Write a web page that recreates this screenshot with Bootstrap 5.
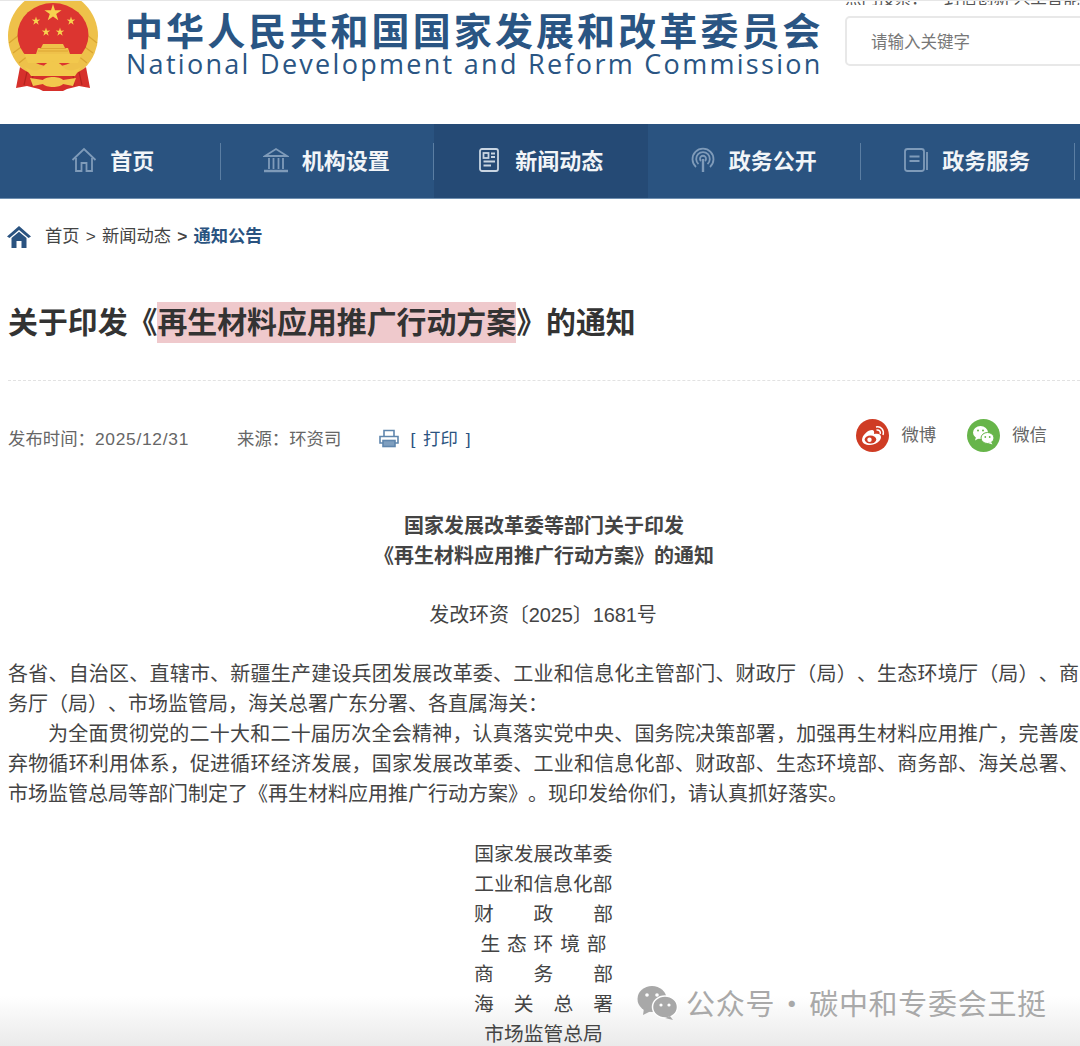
<!DOCTYPE html>
<html lang="zh-CN">
<head>
    <meta charset="UTF-8">
    <meta name="viewport" content="width=device-width, initial-scale=1.0">
    <title>关于印发《再生材料应用推广行动方案》的通知</title>
    <link href="https://cdn.jsdelivr.net/npm/bootstrap@5.3.3/dist/css/bootstrap.min.css" rel="stylesheet">
    <style>
        html, body {
            height: 1046px;
            overflow: hidden;
        }
        body {
            font-family: "Liberation Sans", "Noto Sans CJK SC", sans-serif;
            color: #444;
            background: #fff;
            position: relative;
            text-spacing-trim: space-all;
        }
        .top-strip {
            height: 124px;
            border-top: 1px solid #e6e6e6;
            padding-left: 8px;
            overflow: hidden;
        }
        .emblem {
            width: 92px;
            height: 90px;
            flex: none;
            margin: 0 0 0 -1px;
        }
        .site-name {
            margin-left: 26px;
            width: 701px;
            flex: none;
            color: #2a5583;
        }
        .site-cn {
            font-family: "Noto Sans CJK SC", sans-serif;
            font-weight: 700;
            font-size: 38px;
            letter-spacing: 3.100px;
            line-height: 38px;
            margin-top: 9px;
            white-space: nowrap;
        }
        .site-en {
            font-family: "Open Sans", sans-serif;
            font-size: 27px;
            letter-spacing: 2.290px;
            line-height: 30px;
            margin-top: 1px;
            margin-left: 1px;
            white-space: nowrap;
        }
        .search-side {
            margin-left: 19px;
            flex: 1 0 260px;
        }
        .hot-words {
            font-family: "Noto Sans CJK SC", sans-serif;
            font-size: 16.500px;
            line-height: 16px;
            height: 5px;
            margin-top: -1px;
            margin-bottom: 11px;
            overflow: hidden;
            white-space: nowrap;
            display: flex;
            align-items: flex-end;
            color: #555;
        }
        .search-input.form-control {
            height: 50px;
            border: 2px solid #e8e8e8;
            border-radius: 5px;
            padding-left: 24px;
            font-family: "Noto Sans CJK SC", sans-serif;
            font-size: 16.500px;
        }
        .search-input::placeholder {
            color: #777;
        }
        .main-nav {
            height: 75px;
            background: #2a5380;
            border-bottom: 1px solid #6f8fb0;
            flex-wrap: nowrap;
            width: 1080px;
            padding-left: 7px;
        }
        .main-nav .nav-item {
            width: 213.500px;
            flex: none;
            position: relative;
        }
        .main-nav .nav-item.with-rule::after {
            content: "";
            position: absolute;
            right: 0;
            top: 19px;
            height: 37px;
            width: 1px;
            background: #5b7ea3;
        }
        .main-nav .nav-link {
            height: 74px;
            padding: 0 2px 3px 0;
            display: flex;
            align-items: center;
            justify-content: center;
            gap: 13px;
            color: #f2f5f8;
            font-family: "Noto Sans CJK SC", sans-serif;
            font-size: 22px;
            font-weight: 700;
        }
        .main-nav .nav-link.active {
            background: #254a75;
            color: #f2f5f8;
        }
        .nav-glyph {
            width: 26px;
            height: 26px;
            flex: none;
        }
        .page-body {
            padding: 0 0 0 8px;
            position: relative;
            z-index: 1;
        }
        .crumbs {
            height: 76px;
            align-items: center;
            margin: 0;
            font-size: 17.250px;
            --bs-breadcrumb-divider: ">";
            --bs-breadcrumb-item-padding-x: 6.200px;
            --bs-breadcrumb-divider-color: #444;
            padding-bottom: 0;
        }
        .crumbs a {
            color: #444;
            text-decoration: none;
        }
        .crumbs .breadcrumb-item.active {
            color: #2a5380;
            font-weight: 700;
        }
        .home-glyph {
            width: 24px;
            height: 22px;
            margin: 0 14px 0 -1px;
        }
        .article-title {
            margin: 26px 0 0;
            font-size: 29.900px;
            font-weight: 700;
            line-height: 44px;
            color: #333;
        }
        .article-title span {
            background: #efc9cc;
            padding: 4px 0;
        }
        .dash-rule {
            margin-top: 35px;
            border-top: 1px dashed #e2e2e2;
        }
        .meta-row {
            margin-top: 36px;
            height: 44px;
            font-size: 17.400px;
            color: #666;
            white-space: nowrap;
        }
        .meta-date {
            letter-spacing: .7px;
        }
        .print-link {
            color: #2a5380;
            text-decoration: none;
            margin-left: 38px;
            display: flex;
            align-items: center;
            gap: 11px;
            word-spacing: 3px;
        }
        .share-row {
            margin-right: 33px;
            margin-top: -7px;
            gap: 31px;
        }
        .share-glyph {
            width: 33px;
            height: 33px;
            flex: none;
        }
        .doc-text {
            margin-top: 50px;
            font-size: 20px;
            line-height: 30px;
            color: #444;
        }
        .doc-head {
            font-weight: 700;
            margin: 0;
            text-align: center;
        }
        .doc-no {
            margin: 29px 0 29px;
            padding-right: 2px;
            text-align: center;
            letter-spacing: -.1px;
        }
        .doc-para {
            margin: 0;
            width: 1071px;
            text-align: justify;
        }
        .doc-para.indent {
            text-indent: 2em;
        }
        .sign-block {
            width: 139px;
            margin: 30px 0 0 466px;
            font-size: 19.750px;
        }
        .sign-line {
            text-align: center;
            white-space: nowrap;
        }
        .sign-line.spread {
            text-align: justify;
            text-align-last: justify;
            white-space: normal;
        }
        .sign-line.narrow {
            width: 126px;
            margin: 0 auto;
        }
        .fade-bottom {
            position: absolute;
            left: 0;
            right: 0;
            bottom: 0;
            height: 50px;
            background: linear-gradient(to bottom, rgba(236,236,236,0), rgba(234,234,234,1));
            pointer-events: none;
        }
        .watermark {
            position: absolute;
            z-index: 2;
            left: 637px;
            top: 983px;
            display: flex;
            align-items: center;
            gap: 8px;
            font-family: "Noto Sans CJK SC", sans-serif;
            font-size: 29px;
            letter-spacing: .7px;
            word-spacing: -5px;
            line-height: 38px;
            color: #a9a9a9;
            white-space: nowrap;
        }
        .watermark svg {
            width: 41px;
            height: 35px;
            flex: none;
        }
    </style>
</head>
<body>
    <!-- 顶部 -->
    <header class="top-strip d-flex">
        <svg class="emblem" viewBox="0 0 92 90" aria-hidden="true">
            <defs>
                <polygon id="emblem-star" points="0,-9 2,-2.750 8.560,-2.780 3.230,1.050 5.290,7.280 0,3.400 -5.290,7.280 -3.230,1.050 -8.560,-2.780 -2,-2.750"/>
            </defs>
            <!-- 麦穗外环 -->
            <circle cx="46" cy="35" r="45" fill="#eec14a"/>
            <path d="M2 42 L12 34 M90 42 L80 34 M6 52 L17 44 M86 52 L75 44 M12 62 L22 54 M80 62 L70 54" stroke="#d9a531" stroke-width="1.200"/>
            <ellipse cx="46" cy="34" rx="35.500" ry="32" fill="#dc3530"/>
            <g fill="#f7d34f">
                <use href="#emblem-star" transform="translate(46 12)"/>
                <use href="#emblem-star" transform="translate(29 20) scale(.5)"/>
                <use href="#emblem-star" transform="translate(64 20) scale(.5)"/>
                <use href="#emblem-star" transform="translate(39 31) scale(.5)"/>
                <use href="#emblem-star" transform="translate(53 31) scale(.5)"/>
            </g>
            <!-- 天安门 -->
            <path d="M36 43 H56 L58 47 H61 L63 53 H29 L31 47 H34 Z" fill="#efc14a"/>
            <path d="M33 47.500 H59 M31 50 H61" stroke="#d9a02e" stroke-width=".8"/>
            <path d="M17 53 H75 L71 62 H21 Z" fill="#f2c84d"/>
            <!-- 红绶 -->
            <path d="M13 66 C20 72 28 74 36 74 H56 C64 74 72 72 79 66 L83 87 L72 85 L60 88 L56 90 H36 L32 88 L20 85 L9 87 Z" fill="#d6302b"/>
            <path d="M20 71 L17 84 M26 73 L25 85 M66 73 L67 85 M72 71 L75 84" stroke="#b5231f" stroke-width="1.200"/>
            <path d="M18 66 C26 71 32 70 36 66 C40 59 52 59 56 66 C60 70 66 71 74 66 L68 75 H24 Z" fill="#f2c84d"/>
            <path d="M23 77 L36 79 C39 75 53 75 56 79 L69 77 L66 85 L56 83 C53 87 39 87 36 83 L26 85 Z" fill="#f2c84d"/>
        </svg>
        <div class="site-name">
            <div class="site-cn">中华人民共和国国家发展和改革委员会</div>
            <div class="site-en">National Development and Reform Commission</div>
        </div>
        <div class="search-side">
            <div class="hot-words">热门搜索：一封信创新 人工智能</div>
            <input class="form-control search-input" type="text" placeholder="请输入关键字">
        </div>
    </header>

    <!-- 导航 -->
    <ul class="nav main-nav">
        <li class="nav-item with-rule">
            <a class="nav-link" href="#">
                <svg class="nav-glyph" viewBox="0 0 26 26" fill="none" stroke="#7f9bb9" stroke-width="1.800"><path d="M1.500 13 L13 2 L24.500 13"/><path d="M5 11 V24 H10.500 V16 H15.500 V24 H21 V11"/></svg>
                首页
            </a>
        </li>
        <li class="nav-item with-rule">
            <a class="nav-link" href="#">
                <svg class="nav-glyph" viewBox="0 0 26 26" fill="none" stroke="#7f9bb9" stroke-width="1.800"><path d="M2 9 L13 2 L24 9 Z"/><path d="M6 11 V22 M10.500 11 V22 M15.500 11 V22 M20 11 V22"/><path d="M1 24 H25" stroke-width="2.500"/></svg>
                机构设置
            </a>
        </li>
        <li class="nav-item">
            <a class="nav-link active" href="#">
                <svg class="nav-glyph" viewBox="0 0 26 26" fill="none" stroke="#c9d5e2" stroke-width="1.800"><rect x="4" y="2" width="18" height="22" rx="2"/><rect x="7.500" y="6" width="5" height="5"/><path d="M15 6.500 H19 M15 10 H19 M7.500 14.500 H19 M7.500 18.500 H15"/></svg>
                新闻动态
            </a>
        </li>
        <li class="nav-item with-rule">
            <a class="nav-link" href="#">
                <svg class="nav-glyph" viewBox="0 0 26 26" fill="none" stroke="#7f9bb9" stroke-width="1.800"><path d="M6 20 A10.500 10.500 0 1 1 20 20"/><path d="M8.500 17 A6.800 6.800 0 1 1 17.500 17"/><path d="M11 14 A3 3 0 1 1 15 14"/><path d="M13 12 V25" stroke-width="2.400"/></svg>
                政务公开
            </a>
        </li>
        <li class="nav-item with-rule">
            <a class="nav-link" href="#">
                <svg class="nav-glyph" viewBox="0 0 26 26" fill="none" stroke="#7f9bb9" stroke-width="1.800"><rect x="2" y="2" width="19" height="22" rx="2.500"/><path d="M24 5 V23"/><path d="M6.500 9.500 H16.500 M6.500 14 H16.500"/></svg>
                政务服务
            </a>
        </li>
    </ul>

    <main class="page-body">
        <ol class="breadcrumb crumbs">
            <li class="breadcrumb-item d-flex align-items-center">
                <svg class="home-glyph" viewBox="0 0 24 22"><path d="M12 0 L24 10.500 L21.500 12 L12 4 L2.500 12 L0 10.500 Z" fill="#2a5380"/><path d="M4.500 12 L12 5.800 L19.500 12 V22 H14.500 V15 H9.500 V22 H4.500 Z" fill="#2a5380"/></svg>
                <a href="#">首页</a>
            </li>
            <li class="breadcrumb-item"><a href="#">新闻动态</a></li>
            <li class="breadcrumb-item active" aria-current="page">通知公告</li>
        </ol>

        <h1 class="article-title">关于印发《<span>再生材料应用推广行动方案</span>》的通知</h1>
        <div class="dash-rule"></div>

        <div class="meta-row d-flex align-items-center">
            <span>发布时间：<span class="meta-date">2025/12/31</span></span>
            <span class="ms-5">来源：环资司</span>
            <a class="print-link" href="#">
                <svg width="20" height="19" viewBox="0 0 20 19" fill="none" stroke="#5f86ad" stroke-width="1.600"><path d="M5 7 V1.500 H15 V7"/><path d="M4 14 H1 V7.500 H19 V14 H16"/><rect x="4" y="11.500" width="12" height="6" fill="#7f9fbf"/></svg>
                <span>[ 打印 ]</span>
            </a>
            <div class="share-row d-flex ms-auto">
                <div class="d-flex align-items-center gap-2">
                    <svg class="share-glyph me-1" viewBox="0 0 33 33">
                        <circle cx="16.500" cy="16.500" r="16.500" fill="#cf3c24"/>
                        <path d="M6 21 C6 16 12 11 16 11 C18 11 18.500 13 18 15 C22 14 25 15 25 18 C25 22 19.500 26 14 26 C9.500 26 6 24 6 21Z" fill="#fff"/>
                        <ellipse cx="14.500" cy="20.500" rx="5.800" ry="4" fill="#cf3c24"/>
                        <circle cx="13.500" cy="20.800" r="2.200" fill="#fff"/>
                        <path d="M20 8 C25 7 28.500 11 27 16 M20.500 11 C23 10.500 25 12.500 24.200 15" fill="none" stroke="#fff" stroke-width="1.500"/>
                    </svg>
                    <span>微博</span>
                </div>
                <div class="d-flex align-items-center gap-2">
                    <svg class="share-glyph me-1" viewBox="0 0 33 33">
                        <circle cx="16.500" cy="16.500" r="16.500" fill="#67b54a"/>
                        <ellipse cx="13.500" cy="13.500" rx="7.500" ry="6.500" fill="#fff"/>
                        <path d="M9 18 L8 21.500 L12.500 19Z" fill="#fff"/>
                        <ellipse cx="20.500" cy="19" rx="6.500" ry="5.500" fill="#fff" stroke="#67b54a"/>
                        <path d="M24 23 L25.500 25.500 L21 24Z" fill="#fff"/>
                        <circle cx="11" cy="11.500" r="1" fill="#67b54a"/>
                        <circle cx="16" cy="11.500" r="1" fill="#67b54a"/>
                        <circle cx="18.300" cy="18" r=".9" fill="#67b54a"/>
                        <circle cx="22.700" cy="18" r=".9" fill="#67b54a"/>
                    </svg>
                    <span>微信</span>
                </div>
            </div>
        </div>

        <article class="doc-text">
            <p class="doc-head">国家发展改革委等部门关于印发<br>《再生材料应用推广行动方案》的通知</p>
            <p class="doc-no">发改环资〔2025〕1681号</p>
            <p class="doc-para">各省、自治区、直辖市、新疆生产建设兵团发展改革委、工业和信息化主管部门、财政厅（局）、生态环境厅（局）、商务厅（局）、市场监管局，海关总署广东分署、各直属海关：</p>
            <p class="doc-para indent">为全面贯彻党的二十大和二十届历次全会精神，认真落实党中央、国务院决策部署，加强再生材料应用推广，完善废弃物循环利用体系，促进循环经济发展，国家发展改革委、工业和信息化部、财政部、生态环境部、商务部、海关总署、市场监管总局等部门制定了《再生材料应用推广行动方案》。现印发给你们，请认真抓好落实。</p>
            <div class="sign-block">
                <div class="sign-line">国家发展改革委</div>
                <div class="sign-line">工业和信息化部</div>
                <div class="sign-line spread">财 政 部</div>
                <div class="sign-line spread narrow">生 态 环 境 部</div>
                <div class="sign-line spread">商 务 部</div>
                <div class="sign-line spread">海 关 总 署</div>
                <div class="sign-line">市场监管总局</div>
            </div>
        </article>
    </main>

    <div class="fade-bottom"></div>
    <div class="watermark">
        <svg viewBox="0 0 41 35" aria-hidden="true">
            <ellipse cx="15" cy="14" rx="14.500" ry="13" fill="#a8a8a8"/>
            <path d="M7 23 L6 30 L14 26Z" fill="#a8a8a8"/>
            <ellipse cx="28" cy="22" rx="12.500" ry="11" fill="#a8a8a8" stroke="#fff" stroke-width="1.500"/>
            <path d="M33 31 L36 35 L28 33Z" fill="#a8a8a8"/>
            <circle cx="10" cy="10" r="1.800" fill="#fff"/>
            <circle cx="20" cy="10" r="1.800" fill="#fff"/>
            <circle cx="24" cy="20" r="1.600" fill="#fff"/>
            <circle cx="32" cy="20" r="1.600" fill="#fff"/>
        </svg>
        <span>公众号 · 碳中和专委会王挺</span>
    </div>

    <script src="https://cdn.jsdelivr.net/npm/bootstrap@5.3.3/dist/js/bootstrap.bundle.min.js"></script>
</body>
</html>
